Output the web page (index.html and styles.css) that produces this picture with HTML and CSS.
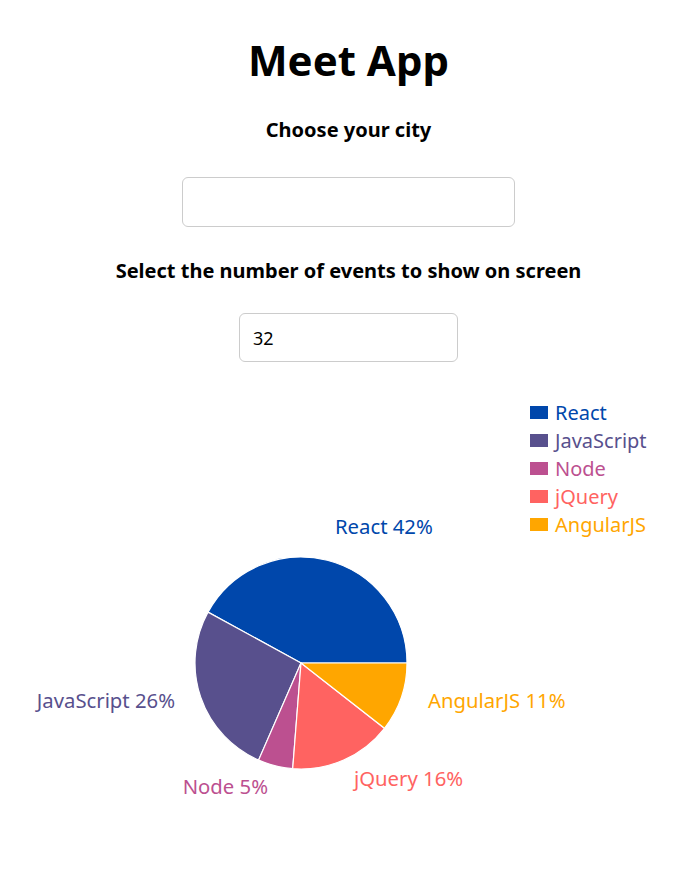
FILE: index.html
```html
<!DOCTYPE html>
<html lang="en">
  <head>
    <meta charset="UTF-8" />
    <meta name="viewport" content="width=device-width, initial-scale=1.0" />
    <title>Meet App</title>
    <link rel="stylesheet" href="styles.css">
  </head>
  <body>
    <div class="app">
      <h1 class="title">Meet App</h1>

      <div class="city-search">
        <h3 class="field-label">Choose your city</h3>
        <input type="text" class="city" />
      </div>

      <div class="number-of-events">
        <h3 class="field-label">Select the number of events to show on screen</h3>
        <input type="number" class="event-count" value="32" />
      </div>

      <div class="chart-wrapper">
        <svg class="pie-chart" width="697" height="440" viewBox="0 0 697 440">
          <g class="sectors" stroke="#fff" stroke-width="1.2">
            <path fill="#0047ab" d="M301,273 L407,273 A106,106 0 0 0 208,222.1 Z" />
            <path fill="#58508d" d="M301,273 L208,222.1 A106,106 0 0 0 258.6,370.1 Z" />
            <path fill="#bc5090" d="M301,273 L258.6,370.1 A106,106 0 0 0 292.7,378.7 Z" />
            <path fill="#ff6361" d="M301,273 L292.7,378.7 A106,106 0 0 0 384.5,338.3 Z" />
            <path fill="#ffa600" d="M301,273 L384.5,338.3 A106,106 0 0 0 407,273 Z" />
          </g>
          <g class="labels">
            <text x="335" y="136" fill="#0047ab" text-anchor="start">React 42%</text>
            <text x="175" y="310" fill="#58508d" text-anchor="end">JavaScript 26%</text>
            <text x="268" y="396" fill="#bc5090" text-anchor="end">Node 5%</text>
            <text x="354" y="388" fill="#ff6361" text-anchor="start">jQuery 16%</text>
            <text x="428" y="310" fill="#ffa600" text-anchor="start">AngularJS 11%</text>
          </g>
        </svg>

        <ul class="legend">
          <li class="legend-item react"><span class="swatch"></span>React</li>
          <li class="legend-item javascript"><span class="swatch"></span>JavaScript</li>
          <li class="legend-item node"><span class="swatch"></span>Node</li>
          <li class="legend-item jquery"><span class="swatch"></span>jQuery</li>
          <li class="legend-item angular"><span class="swatch"></span>AngularJS</li>
        </ul>
      </div>
    </div>
  </body>
</html>
```

FILE: styles.css
```css
body {
  margin: 0;
  font-family: "Noto Sans", "Open Sans", Arial, sans-serif;
  color: #000;
  background: #fff;
}

.app {
  display: flex;
  flex-direction: column;
  align-items: center;
  text-align: center;
}

.title {
  margin: 36px 0 0;
  font-size: 42px;
  line-height: 48px;
  font-weight: 700;
}

.city-search,
.number-of-events {
  display: flex;
  flex-direction: column;
  align-items: center;
}

.field-label {
  margin: 0;
  font-size: 20px;
  line-height: 24px;
  font-weight: 700;
}

.city-search .field-label {
  margin-top: 34px;
}

.number-of-events .field-label {
  margin-top: 32px;
}

.city,
.event-count {
  box-sizing: border-box;
  border: 1px solid #ccc;
  border-radius: 6px;
  font-family: inherit;
  font-size: 18px;
  color: #000;
  background: #fff;
  outline: none;
}

.city {
  margin-top: 35px;
  width: 333px;
  height: 50px;
  padding: 0 14px;
}

.event-count {
  margin-top: 30px;
  width: 219px;
  height: 49px;
  padding: 0 13px;
  -moz-appearance: textfield;
}

.event-count::-webkit-inner-spin-button,
.event-count::-webkit-outer-spin-button {
  -webkit-appearance: none;
  margin: 0;
}

.chart-wrapper {
  position: relative;
  margin-top: 28px;
  width: 697px;
  height: 440px;
}

.pie-chart {
  display: block;
}

.pie-chart text {
  font-family: "Noto Sans", "Open Sans", Arial, sans-serif;
  font-size: 20.3px;
  dominant-baseline: central;
}

.legend {
  position: absolute;
  top: 8px;
  left: 530px;
  margin: 0;
  padding: 0;
  list-style: none;
  text-align: left;
}

.legend-item {
  display: flex;
  align-items: center;
  height: 28px;
  font-size: 20px;
}

.swatch {
  width: 18px;
  height: 13px;
  margin-right: 7px;
}

.react { color: #0047ab; }
.react .swatch { background: #0047ab; }
.javascript { color: #58508d; }
.javascript .swatch { background: #58508d; }
.node { color: #bc5090; }
.node .swatch { background: #bc5090; }
.jquery { color: #ff6361; }
.jquery .swatch { background: #ff6361; }
.angular { color: #ffa600; }
.angular .swatch { background: #ffa600; }
```
